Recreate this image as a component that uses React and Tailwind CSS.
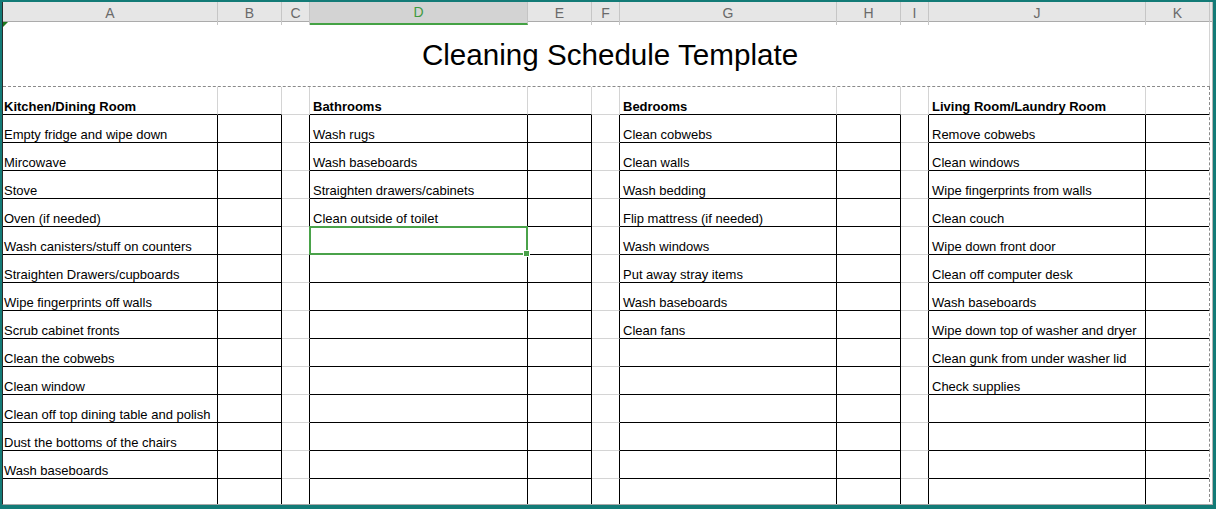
const letters = ["A", "B", "C", "D", "E", "F", "G", "H", "I", "J", "K"];

const tables = {
  0: {
    title: "Kitchen/Dining Room",
    items: [
      "Empty fridge and wipe down",
      "Mircowave",
      "Stove",
      "Oven (if needed)",
      "Wash canisters/stuff on counters",
      "Straighten Drawers/cupboards",
      "Wipe fingerprints off walls",
      "Scrub cabinet fronts",
      "Clean the cobwebs",
      "Clean window",
      "Clean off top dining table and polish",
      "Dust the bottoms of the chairs",
      "Wash baseboards",
    ],
  },
  3: {
    title: "Bathrooms",
    items: ["Wash rugs", "Wash baseboards", "Straighten drawers/cabinets", "Clean outside of toilet"],
  },
  6: {
    title: "Bedrooms",
    items: [
      "Clean cobwebs",
      "Clean walls",
      "Wash bedding",
      "Flip mattress (if needed)",
      "Wash windows",
      "Put away stray items",
      "Wash baseboards",
      "Clean fans",
    ],
  },
  9: {
    title: "Living Room/Laundry Room",
    items: [
      "Remove cobwebs",
      "Clean windows",
      "Wipe fingerprints from walls",
      "Clean couch",
      "Wipe down front door",
      "Clean off computer desk",
      "Wash baseboards",
      "Wipe down top of washer and dryer",
      "Clean gunk from under washer lid",
      "Check supplies",
    ],
  },
};

const headCols =
  "grid grid-cols-[215px_64px_28px_218px_64px_28px_217px_64px_28px_217px_64px]";
// last column is 1px narrower, the dashed page break takes the rest
const bodyCols =
  "grid grid-cols-[215px_64px_28px_218px_64px_28px_217px_64px_28px_217px_63px]";

function cellClass(r, c) {
  const isGap = c === 2 || c === 5 || c === 8;
  const b = isGap ? "border-b border-b-[#d4d4d4]" : "border-b border-b-black";
  if (c === 10) return b;
  if (r === 0) return `${b} border-r border-r-[#d4d4d4]`;
  return `${b} border-r border-r-black`;
}

function Cell({ r, c }) {
  const t = tables[c];
  let text = "";
  if (t) text = r === 0 ? t.title : t.items[r - 1] || "";
  const selected = r === 5 && c === 3;
  return (
    <div
      className={`relative h-[28px] flex items-end ${c === 0 ? "pl-[1px]" : "pl-[3px]"} pb-0 whitespace-nowrap text-[13px] leading-[15px] text-black ${
        r === 0 ? "font-bold" : ""
      } ${cellClass(r, c)}`}
    >
      {text}
      {selected && (
        <div className="absolute -left-[1px] -top-[1px] -right-[1px] -bottom-[1px] border-2 border-[#4aa24a] z-10">
          <div className="absolute -right-[4px] -bottom-[4px] w-[5px] h-[5px] bg-[#4aa24a] border border-white box-content" />
        </div>
      )}
    </div>
  );
}

export default function App() {
  const rows = Array.from({ length: 15 }, (_, i) => i);
  return (
    <div className="w-[1216px] h-[509px] bg-[#137b77] pt-[2px] pl-[2px] pr-[3px] pb-[4px] font-['Liberation_Sans',Arial,sans-serif]">
      <div className="h-full bg-white border-l border-l-[#2a2a2a] border-r border-r-[#b5b5b5] border-b border-b-[#a9a9a9] overflow-hidden">
        {/* column letters */}
        <div className={`${headCols} h-[20px] bg-[#e6e6e6] border-b border-b-[#ababab]`}>
          {letters.map((l) =>
            l === "D" ? (
              <div
                key={l}
                className="flex items-center justify-center bg-[#d3d3d3] border-r border-r-[#c4c4c4] border-b-2 border-b-[#44a244] text-[14px] text-[#3f9a3f]"
              >
                {l}
              </div>
            ) : (
              <div
                key={l}
                className="flex items-center justify-center border-r border-r-[#c6c6c6] text-[14px] text-[#6a6a6a]"
              >
                {l}
              </div>
            )
          )}
        </div>

        {/* title row */}
        <div className="relative h-[65px] w-[1207px] border-b border-dashed border-b-[#8a8a8a] flex items-center justify-center pl-[7px]">
          <svg className="absolute left-0 top-0" width="5" height="5" viewBox="0 0 5 5">
            <polygon points="0,0 5,0 0,5" fill="#1f7a1f" />
          </svg>
          <span className="text-[29.6px] text-black leading-none pt-[2px]">Cleaning Schedule Template</span>
          <div className="absolute right-0 top-0 h-full border-r border-r-[#d4d4d4]" />
        </div>

        {/* table rows */}
        <div className="w-[1207px] border-r border-dashed border-r-[#8a8a8a]">
          {rows.map((r) => (
            <div key={r} className={bodyCols}>
              {letters.map((_, c) => (
                <Cell key={c} r={r} c={c} />
              ))}
            </div>
          ))}
        </div>
      </div>
    </div>
  );
}
